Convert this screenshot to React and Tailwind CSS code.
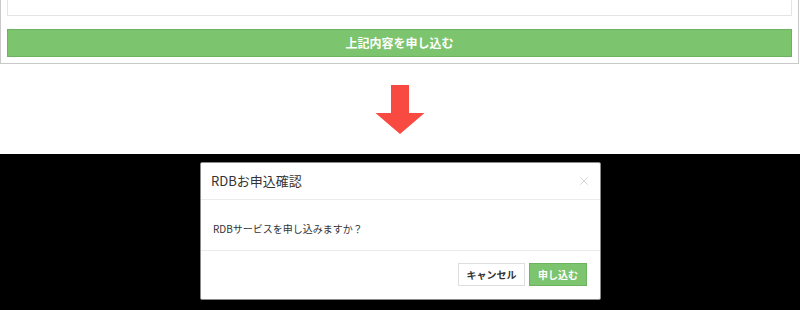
import { X } from 'lucide-react'

// 申込フォーム下部 → 確認モーダルの説明図
const jp = { fontFamily: '"Noto Sans CJK JP", "Liberation Sans", sans-serif' }

export default function App() {
  return (
    <div className="w-[800px] h-[310px] flex flex-col bg-white overflow-hidden" style={jp}>
      {/* 上: フォーム下端 */}
      <div className="h-[154px] flex flex-col">
        <div className="w-[799px] h-[64px] border-x border-b border-[#c9c9c9] px-[6px] flex flex-col">
          <div className="h-[16px] border-x border-b border-[#e4e4e4] bg-white" />
          <button className="mt-[13px] h-[28px] w-full bg-[#7cc46e] border border-[#6cb25f] text-white text-[12px] font-bold leading-none">
            上記内容を申し込む
          </button>
        </div>
        <div className="flex justify-center pt-[21px]">
          <svg width="50" height="49" viewBox="0 0 50 49">
            <path d="M16 0 H34 V28 H49.5 L25 49 L0.5 28 H16 Z" fill="#f84a40" />
          </svg>
        </div>
      </div>

      {/* 下: 確認モーダル */}
      <div className="h-[156px] bg-black pt-[8px] pl-[200px]">
        <div className="w-[401px] h-[138px] bg-white border border-[#8a8a8a] rounded-[2px] flex flex-col">
          <div className="h-[37px] flex items-center justify-between pl-[10px] pr-[9px] border-b border-[#ececec]">
            <span className="text-[13px] text-[#333]">RDBお申込確認</span>
            <X size={14} strokeWidth={1.3} className="text-[#c8c8c8]" />
          </div>
          <div className="h-[51px] pl-[12px] pt-[14px] border-b border-[#ececec]">
            <span className="text-[10px] text-[#333] leading-[12px]">RDBサービスを申し込みますか？</span>
          </div>
          <div className="flex-1 flex justify-end items-start gap-[4px] pr-[13px] pt-[12px]">
            <button className="w-[67px] h-[23px] bg-white border border-[#dedede] text-[10px] text-[#333] font-bold leading-none">
              キャンセル
            </button>
            <button className="w-[58px] h-[23px] bg-[#7cc46e] border border-[#6cb25f] text-[10px] text-white font-bold leading-none">
              申し込む
            </button>
          </div>
        </div>
      </div>
    </div>
  )
}
